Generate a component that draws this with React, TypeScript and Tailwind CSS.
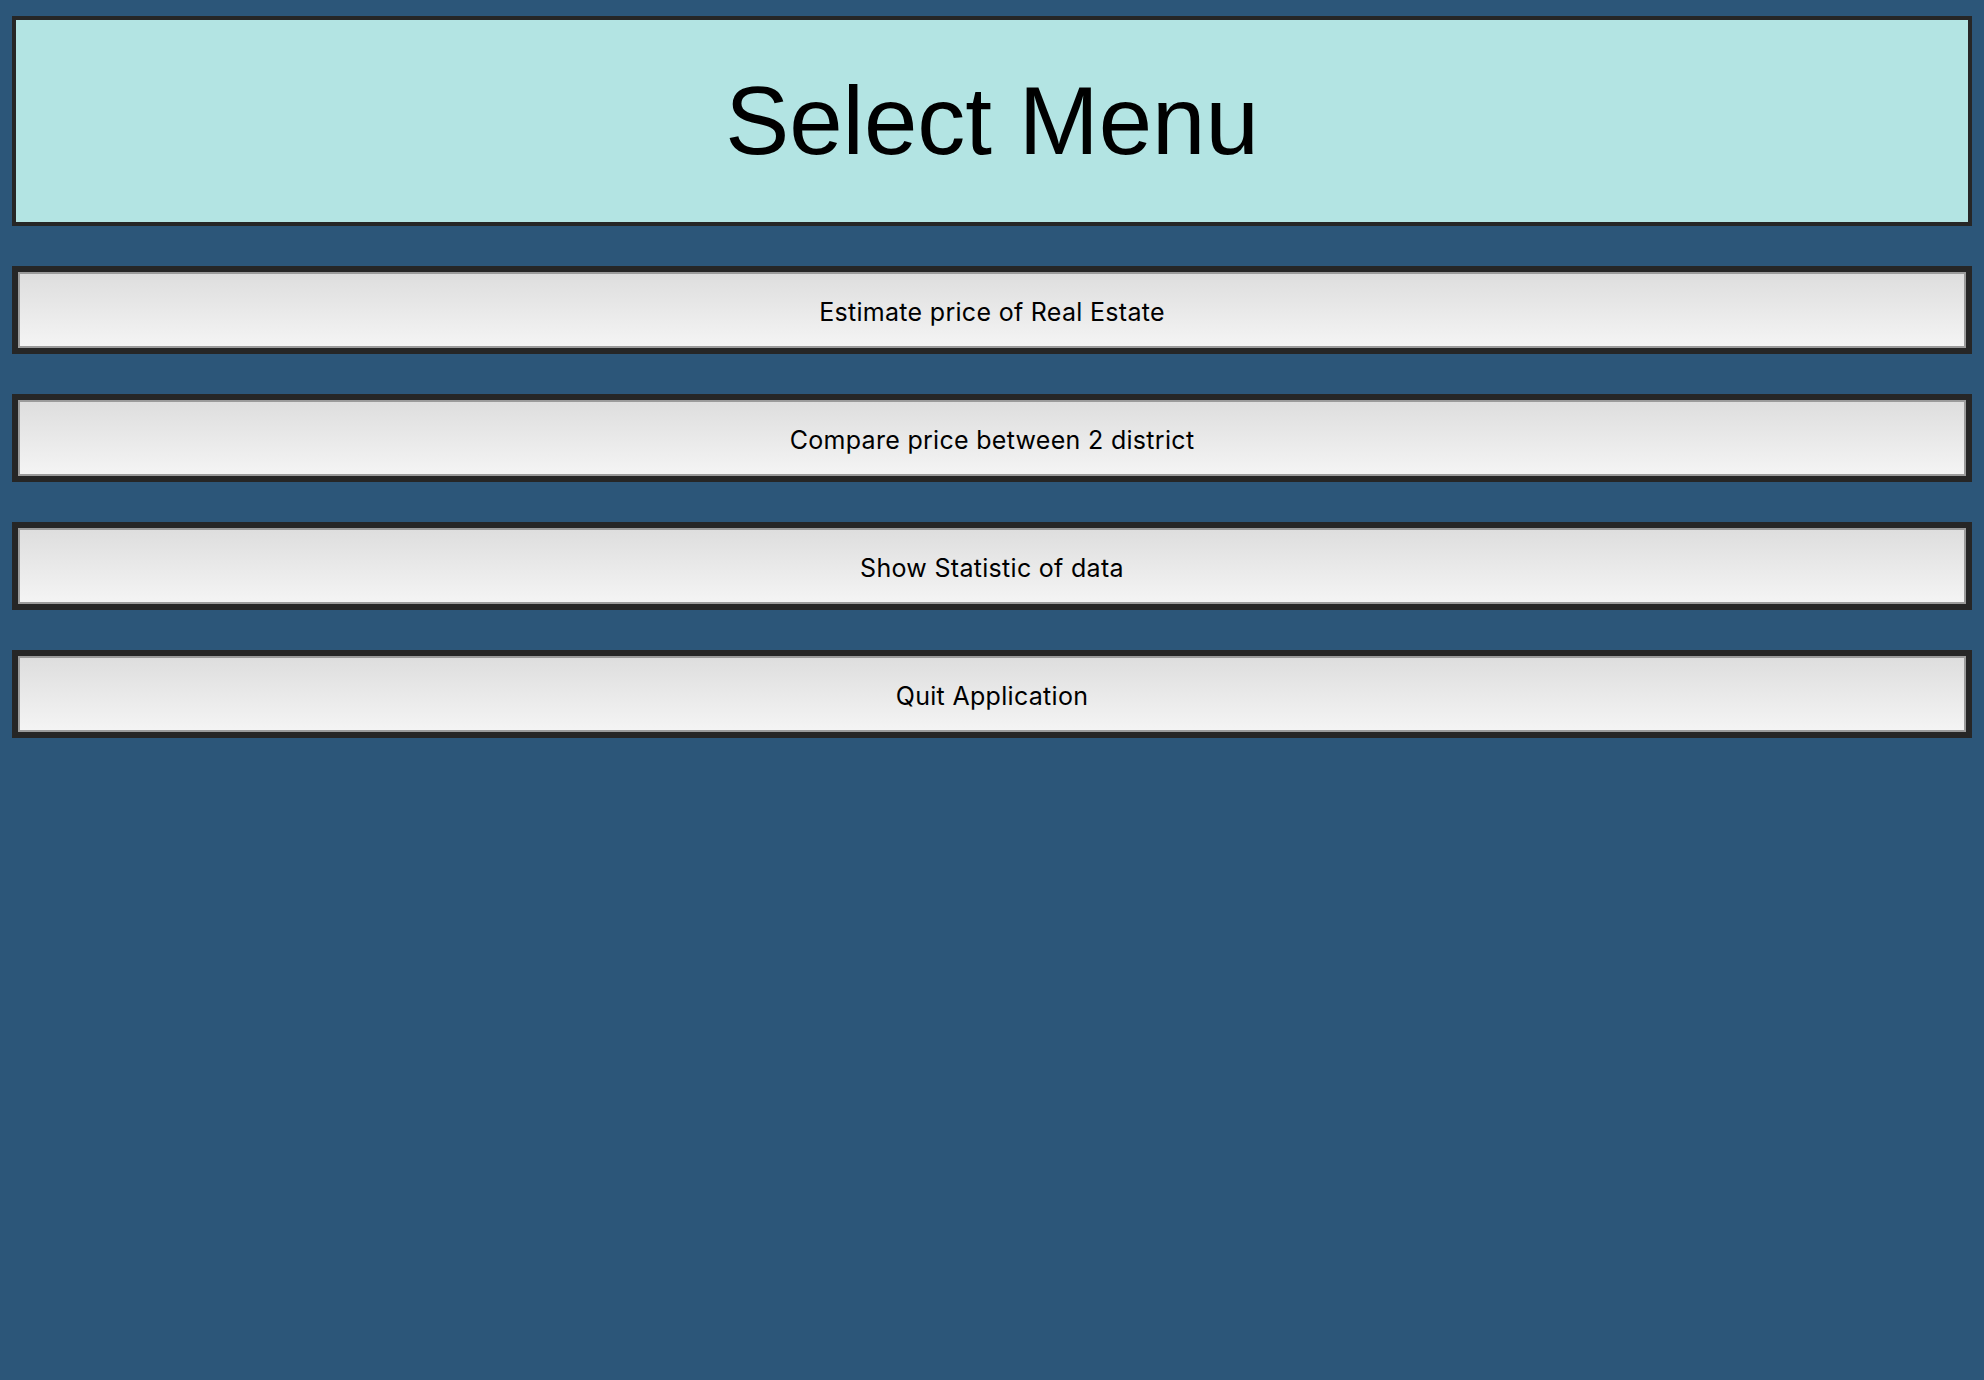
const items = [
  'Estimate price of Real Estate',
  'Compare price between 2 district',
  'Show Statistic of data',
  'Quit Application',
];

function MenuButton({ label }: { label: string }) {
  return (
    <button className="block w-full h-[88px] border-[6px] border-[#262626] bg-[#262626] p-0 cursor-pointer">
      <div className="h-full w-full flex items-center justify-center border-2 border-[#9b9b9b] bg-gradient-to-b from-[#dedede] to-[#f4f4f4]">
        <span className="text-[25px] tracking-[0.3px] text-black font-['Inter','Noto_Sans',sans-serif] pt-[5px]">
          {label}
        </span>
      </div>
    </button>
  );
}

export default function App() {
  return (
    <div className="min-h-screen bg-[#2c5679] px-3 pt-4 flex flex-col gap-10">
      {/* Title */}
      <header className="h-[210px] border-4 border-[#262626] bg-[#b3e4e3] flex items-center justify-center">
        <h1 className="text-[96px] leading-none text-black font-['Liberation_Sans','Arial',sans-serif]">
          Select Menu
        </h1>
      </header>

      {items.map((label) => (
        <MenuButton key={label} label={label} />
      ))}
    </div>
  );
}
